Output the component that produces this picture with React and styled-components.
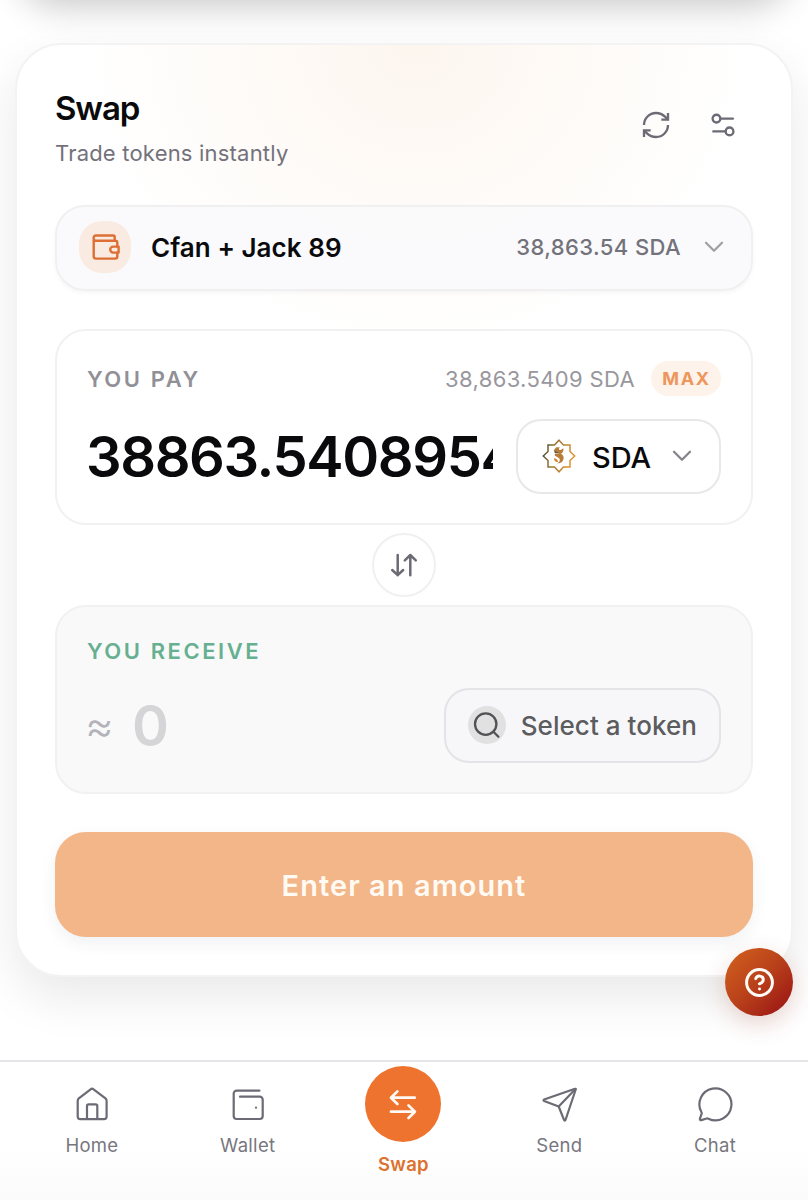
import React from 'react';
import styled, { createGlobalStyle } from 'styled-components';

const App = () => {
	return (
		<>
			<GlobalStyle />
			<S_PAGE>
				<S_MAIN>
					<S_PREVIOUS />
					<S_CARD>
						<S_HEADER>
							<div>
								<S_TITLE>Swap</S_TITLE>
								<S_SUBTITLE>Trade tokens instantly</S_SUBTITLE>
							</div>
							<S_ACTIONS>
								<RefreshIcon />
								<SettingsIcon />
							</S_ACTIONS>
						</S_HEADER>

						<S_ACCOUNT>
							<S_ACCOUNT_ICON>
								<WalletBadgeIcon />
							</S_ACCOUNT_ICON>
							<S_ACCOUNT_NAME>Cfan + Jack 89</S_ACCOUNT_NAME>
							<S_ACCOUNT_BALANCE>38,863.54 SDA</S_ACCOUNT_BALANCE>
							<ChevronIcon color="#a0a0a5" />
						</S_ACCOUNT>

						<S_PANEL>
							<S_PANEL_TOP $height={35}>
								<S_LABEL>YOU PAY</S_LABEL>
								<S_AVAILABLE>38,863.5409 SDA</S_AVAILABLE>
								<S_MAX>MAX</S_MAX>
							</S_PANEL_TOP>
							<S_PANEL_ROW>
								<S_AMOUNT>38863.5408954</S_AMOUNT>
								<S_TOKEN>
									<SidraIcon />
									<S_TOKEN_NAME>SDA</S_TOKEN_NAME>
									<ChevronIcon color="#85858b" />
								</S_TOKEN>
							</S_PANEL_ROW>
						</S_PANEL>

						<S_FLIP_ROW>
							<S_FLIP>
								<FlipIcon />
							</S_FLIP>
						</S_FLIP_ROW>

						<S_PANEL $muted>
							<S_PANEL_TOP $height={28}>
								<S_LABEL $green>YOU RECEIVE</S_LABEL>
							</S_PANEL_TOP>
							<S_PANEL_ROW>
								<S_ESTIMATE>
									<S_APPROX>≈</S_APPROX>
									<S_ZERO>0</S_ZERO>
								</S_ESTIMATE>
								<S_SELECT>
									<S_SEARCH>
										<SearchIcon />
									</S_SEARCH>
									<S_SELECT_TEXT>Select a token</S_SELECT_TEXT>
								</S_SELECT>
							</S_PANEL_ROW>
						</S_PANEL>

						<S_SUBMIT>Enter an amount</S_SUBMIT>
					</S_CARD>
				</S_MAIN>

				<S_NAV>
					<S_NAV_ITEM>
						<HomeIcon />
						<S_NAV_LABEL>Home</S_NAV_LABEL>
					</S_NAV_ITEM>
					<S_NAV_ITEM>
						<WalletIcon />
						<S_NAV_LABEL>Wallet</S_NAV_LABEL>
					</S_NAV_ITEM>
					<S_NAV_ITEM $active>
						<S_NAV_CIRCLE>
							<SwapIcon />
						</S_NAV_CIRCLE>
						<S_NAV_LABEL $active>Swap</S_NAV_LABEL>
					</S_NAV_ITEM>
					<S_NAV_ITEM>
						<SendIcon />
						<S_NAV_LABEL>Send</S_NAV_LABEL>
					</S_NAV_ITEM>
					<S_NAV_ITEM>
						<ChatIcon />
						<S_NAV_LABEL>Chat</S_NAV_LABEL>
					</S_NAV_ITEM>
				</S_NAV>

				<S_HELP aria-label="Help">
					<HelpIcon />
				</S_HELP>
			</S_PAGE>
		</>
	);
};

//Icons
const RefreshIcon = () => (
	<S_ICON $size={32} viewBox="0 0 24 24" strokeWidth="1.75">
		<path d="M3 12a9 9 0 0 1 9-9 9.75 9.75 0 0 1 6.74 2.74L21 8" />
		<path d="M21 3v5h-5" />
		<path d="M21 12a9 9 0 0 1-9 9 9.75 9.75 0 0 1-6.74-2.74L3 16" />
		<path d="M8 16H3v5" />
	</S_ICON>
);

const SettingsIcon = () => (
	<S_ICON $size={32} viewBox="0 0 24 24" strokeWidth="1.75" $round>
		<path d="M19.4 7.2H10" />
		<path d="M14 16.8H4.8" />
		<circle cx="7.1" cy="7.2" r="2.9" />
		<circle cx="16.9" cy="16.8" r="2.9" />
	</S_ICON>
);

const WalletBadgeIcon = () => (
	<S_ICON $size={32} viewBox="0 0 32 32" strokeWidth="2.4" $color="#dd6f35" $round>
		<path d="M25.7 9.7V6.1a1.6 1.6 0 0 0-1.6-1.6H6.7a2 2 0 0 0-2 2v1.2a2 2 0 0 0 2 2h19.6a2 2 0 0 1 2 2v3.8M4.700 7v18.200a2.400 2.400 0 0 0 2.400 2.400h19.200a2 2 0 0 0 2-2v-3.800" />
		<path d="M29.600 15.600h-5.400a3 3 0 0 0 0 6h5.400z" />
	</S_ICON>
);

const ChevronIcon = ({ color }) => (
	<S_ICON $size={20} viewBox="0 0 20 20" strokeWidth="2.3" $color={color} $round>
		<path d="m2 5.800 8 8 8-8" />
	</S_ICON>
);

const SidraIcon = () => (
	<S_ICON $size={34} viewBox="0 0 34 34" strokeWidth="1.5">
		<defs>
			<linearGradient id="sidra" x1="0" y1="0" x2="1" y2="0.25">
				<stop offset="0" stopColor="#3f4a3c" />
				<stop offset="0.4" stopColor="#9a7434" />
				<stop offset="1" stopColor="#dd942f" />
			</linearGradient>
		</defs>
		<path
			stroke="url(#sidra)"
			d="M17 1.200 21.500 6H28v6.500l4.700 4.500-4.700 4.500V28h-6.500L17 32.800 12.500 28H6v-6.500L1.300 17 6 12.500V6h6.500z"
		/>
		<path
			fill="#b97c36"
			stroke="none"
			d="M14 8.600c1.300-.6 3-.6 4.200.2-1 .2-1.500.8-1.200 1.600.4.7 1.600.8 2.600 0l1.800-1.200c.3 2.800-.6 4.600-2.600 5.500 1.900.9 3 2.400 2.800 4.600-.2 3.200-2.800 5.200-6.300 5 1.900-.8 2.900-2.300 2.400-4-.5-1.500-2.400-2.200-4.300-3.200-.8-.5-.8-1.300-.4-2l4.600-.2-5.600-3.900z"
		/>
		<path fill="#5d5538" stroke="none" d="m11.800 11 5.900 3.600-4.800-.4z" />
		<path fill="#d9822b" stroke="none" d="M12 19.200c2 .2 4 1.600 4 3.600-1.800.7-3.900-.6-4-3.600z" />
	</S_ICON>
);

const FlipIcon = () => (
	<S_ICON $size={32} viewBox="0 0 32 32" strokeWidth="2.5" $round>
		<path d="M9.700 6v20.200M4.200 21l5.500 5.200 5.500-5.200" />
		<path d="M22.300 26.200V6M16.800 11.400 22.300 6l5.500 5.400" />
	</S_ICON>
);

const SearchIcon = () => (
	<S_ICON $size={30} viewBox="0 0 30 30" strokeWidth="2.3" $color="#525255" $round>
		<circle cx="13.700" cy="14.100" r="10.700" />
		<path d="m21.400 21.800 5 4.900" />
	</S_ICON>
);

const HomeIcon = () => (
	<S_ICON $size={36} viewBox="0 0 36 36" strokeWidth="2.2" $round>
		<path d="M3.700 14.700c0-.9.4-1.700 1.100-2.300L16.600 3.300a2.400 2.400 0 0 1 3 0l11.900 9.100c.7.6 1.100 1.400 1.100 2.300V30.600a2.600 2.600 0 0 1-2.600 2.600H6.300a2.600 2.600 0 0 1-2.600-2.600z" />
		<path d="M13 33V20a1.700 1.700 0 0 1 1.700-1.700h6.900a1.700 1.700 0 0 1 1.700 1.700v13" />
	</S_ICON>
);

const WalletIcon = () => (
	<S_ICON $size={36} viewBox="0 0 36 36" strokeWidth="2.2" $round>
		<path d="M29.500 4.600H6.700a3 3 0 0 0-3 3v22.400a3 3 0 0 0 3 3h23a3 3 0 0 0 3-3V13.700a3 3 0 0 0-3-3H10" />
		<path d="M26 21.700h.01" />
	</S_ICON>
);

const SwapIcon = () => (
	<S_ICON $size={36} viewBox="0 0 36 36" strokeWidth="2.7" $color="#fffaf5" $round>
		<path d="M29.700 11.700H6M12.400 5.400 6 11.700l6.400 6.300" />
		<path d="M6 25.700h23.900M23.500 19.400l6.400 6.300-6.400 6.300" />
	</S_ICON>
);

const SendIcon = () => (
	<S_ICON $size={36} viewBox="0 0 36 36" strokeWidth="2.2" $round>
		<path d="M3.100 13.500 34 2.800c.5-.2.9.2.7.7L24.500 34c-.2.7-1.100.7-1.400.1L17.700 20.500 3.100 15c-.8-.3-.8-1.200 0-1.500z" />
		<path d="M17.700 20.400 34.400 3" />
	</S_ICON>
);

const ChatIcon = () => (
	<S_ICON $size={36} viewBox="0 0 36 36" strokeWidth="2.2" $round>
		<path d="M4.500 26.200a16 16 0 1 1 6.900 6.500c-.6-.3-1.200-.4-1.800-.2l-5.200 1.600c-1 .3-1.700-.4-1.500-1.400l1.700-4.900c.2-.5.200-1.100-.1-1.600z" />
	</S_ICON>
);

const HelpIcon = () => (
	<S_ICON $size={31} viewBox="0 0 24 24" strokeWidth="2.3" $color="#fffaf5" $round>
		<circle cx="12" cy="12" r="10" />
		<path d="M9.090 9a3 3 0 0 1 5.830 1c0 2-3 3-3 3" />
		<path d="M12 17h.01" />
	</S_ICON>
);

const GlobalStyle = createGlobalStyle`
	* {
		margin: 0;
		padding: 0;
		box-sizing: border-box;
	}

	body {
		background: #fff;
		font-family: 'Inter', 'Liberation Sans', sans-serif;
	}

	button {
		border: none;
		background: none;
		font-family: inherit;
	}
`;

const S_ICON = styled.svg`
	display: block;
	flex-shrink: 0;
	width: ${({ $size }) => $size}px;
	height: ${({ $size }) => $size}px;
	fill: none;
	stroke: ${({ $color }) => $color || '#6c6b75'};
	stroke-linecap: ${({ $round }) => ($round ? 'round' : 'butt')};
	stroke-linejoin: ${({ $round }) => ($round ? 'round' : 'miter')};
`;

const S_PAGE = styled.div`
	position: relative;
	display: flex;
	flex-direction: column;
	width: 808px;
	height: 1200px;
	overflow: hidden;
	white-space: nowrap;
`;

const S_MAIN = styled.main`
	flex: 1;
	min-height: 0;
	padding: 0 15px;
`;

/* bottom edge of the card that is scrolled out above */
const S_PREVIOUS = styled.div`
	height: 120px;
	margin: -121px 0 44px 1px;
	border-radius: 44px;
	background: #fff;
	box-shadow: 0 8px 34px rgba(0, 0, 0, 0.21);
`;

const S_CARD = styled.section`
	width: 778px;
	padding: 38px;
	border: 2px solid #f3f3f4;
	border-radius: 46px;
	background: radial-gradient(
			ellipse 330px 300px at 400px 0,
			#fdf6ef 0%,
			#fefaf6 45%,
			#fff 100%
		)
		#fff;
	box-shadow: 0 20px 50px rgba(0, 0, 0, 0.09);
`;

const S_HEADER = styled.header`
	display: flex;
	justify-content: space-between;
	align-items: center;
	height: 84px;
	margin-bottom: 38px;
`;

const S_TITLE = styled.h1`
	font-size: 33px;
	font-weight: 600;
	line-height: 50px;
	letter-spacing: -1.1px;
	color: #0a0a0c;
`;

const S_SUBTITLE = styled.p`
	margin-top: 6px;
	font-size: 22px;
	line-height: 28px;
	letter-spacing: 0.2px;
	color: #73727b;
`;

const S_ACTIONS = styled.div`
	display: flex;
	gap: 35px;
	padding-right: 14px;
`;

const S_ACCOUNT = styled.div`
	display: flex;
	align-items: center;
	height: 86px;
	margin-bottom: 38px;
	padding: 0 27px 2px 22px;
	border: 2px solid #f0f0f1;
	border-radius: 30px;
	background: rgba(249, 249, 251, 0.85);
	box-shadow: 0 2px 4px rgba(0, 0, 0, 0.04);
`;

const S_ACCOUNT_ICON = styled.div`
	display: flex;
	justify-content: center;
	align-items: center;
	width: 52px;
	height: 52px;
	margin-right: 20px;
	border-radius: 23px;
	background: #f9ebe1;
`;

const S_ACCOUNT_NAME = styled.span`
	flex: 1;
	font-size: 26px;
	font-weight: 600;
	letter-spacing: 0.04px;
	color: #0a0a0c;
`;

const S_ACCOUNT_BALANCE = styled.span`
	margin-right: 23px;
	font-size: 22px;
	font-weight: 500;
	letter-spacing: 0.4px;
	color: #73727b;
`;

const S_PANEL = styled.div`
	padding: 30px;
	border: 2px solid #f1f1f2;
	border-radius: 31px;
	background: ${({ $muted }) => ($muted ? '#f9f9f9' : '#fff')};
`;

const S_PANEL_TOP = styled.div`
	display: flex;
	align-items: center;
	height: ${({ $height }) => $height}px;
	margin-bottom: 23px;
`;

const S_LABEL = styled.span`
	flex: 1;
	font-size: 22px;
	font-weight: 600;
	letter-spacing: 2.55px;
	color: ${({ $green }) => ($green ? '#66b091' : '#919097')};
`;

const S_AVAILABLE = styled.span`
	margin-right: 16px;
	font-size: 22px;
	letter-spacing: 0.35px;
	color: #98979d;
`;

const S_MAX = styled.button`
	width: 70px;
	height: 35px;
	border-radius: 18px;
	background: #fdf3eb;
	font-size: 18px;
	font-weight: 700;
	letter-spacing: 1.6px;
	text-indent: 1px;
	color: #ee965c;
`;

const S_PANEL_ROW = styled.div`
	display: flex;
	justify-content: space-between;
	align-items: center;
	height: 74px;
`;

const S_AMOUNT = styled.div`
	width: 406px;
	padding-top: 2px;
	overflow: hidden;
	font-size: 56px;
	font-weight: 600;
	line-height: 72px;
	letter-spacing: -1.4px;
	text-indent: -1px;
	color: #0a0a0c;
`;

const S_TOKEN = styled.button`
	display: flex;
	align-items: center;
	width: 205px;
	height: 75px;
	padding: 0 27px 0 24px;
	border: 2px solid #e8e8eb;
	border-radius: 25px;
	background: #fff;
`;

const S_TOKEN_NAME = styled.span`
	flex: 1;
	margin-left: 16px;
	padding-top: 2px;
	font-size: 29px;
	font-weight: 500;
	letter-spacing: -0.1px;
	text-align: left;
	color: #0a0a0c;
`;

const S_FLIP_ROW = styled.div`
	display: flex;
	justify-content: center;
	align-items: center;
	height: 80px;
`;

const S_FLIP = styled.button`
	display: flex;
	justify-content: center;
	align-items: center;
	width: 64px;
	height: 64px;
	border: 2px solid #f0f0f2;
	border-radius: 50%;
	background: #fff;
`;

const S_ESTIMATE = styled.div`
	display: flex;
	align-items: center;
`;

const S_APPROX = styled.span`
	width: 45px;
	font-size: 44px;
	font-weight: 300;
	line-height: 74px;
	text-indent: -2px;
	color: #b4b3ba;
`;

const S_ZERO = styled.span`
	padding-top: 2px;
	font-size: 56px;
	font-weight: 600;
	line-height: 72px;
	color: #d5d5d7;
`;

const S_SELECT = styled.button`
	display: flex;
	align-items: center;
	width: 277px;
	height: 75px;
	padding: 0 22px;
	border: 2px solid #e3e3e8;
	border-radius: 25px;
	background: #f7f7f9;
`;

const S_SEARCH = styled.span`
	display: flex;
	justify-content: center;
	align-items: center;
	width: 38px;
	height: 38px;
	margin-right: 15px;
	border-radius: 50%;
	background: #e1e1e2;
`;

const S_SELECT_TEXT = styled.span`
	font-size: 26px;
	font-weight: 500;
	letter-spacing: 0.05px;
	color: #5c5c5f;
`;

const S_SUBMIT = styled.button`
	display: block;
	width: 100%;
	height: 105px;
	margin-top: 38px;
	padding-top: 2px;
	border-radius: 31px;
	background: #f3b688;
	box-shadow: 0 6px 16px rgba(40, 50, 80, 0.07);
	font-size: 29px;
	font-weight: 600;
	letter-spacing: 1.050px;
	color: #fffaf3;
`;

const S_NAV = styled.nav`
	display: flex;
	height: 140px;
	padding: 0 15px 0 14px;
	border-top: 2px solid #e6e5ea;
	background: linear-gradient(#fff 60%, #fbfbfb);
	z-index: 1;
`;

const S_NAV_ITEM = styled.div`
	display: flex;
	flex: 1;
	flex-direction: column;
	align-items: center;
	padding-top: ${({ $active }) => ($active ? 4 : 24)}px;
`;

const S_NAV_CIRCLE = styled.div`
	display: flex;
	justify-content: center;
	align-items: center;
	width: 76px;
	height: 76px;
	border-radius: 50%;
	background: #ee732e;
`;

const S_NAV_LABEL = styled.span`
	margin-top: ${({ $active }) => ($active ? 10 : 11)}px;
	font-size: 18.5px;
	font-weight: ${({ $active }) => ($active ? 600 : 400)};
	line-height: 24px;
	letter-spacing: 0.3px;
	color: ${({ $active }) => ($active ? '#dd7130' : '#77767e')};
`;

const S_HELP = styled.button`
	position: absolute;
	top: 948px;
	left: 725px;
	display: flex;
	justify-content: center;
	align-items: center;
	width: 68px;
	height: 68px;
	border-radius: 50%;
	background: linear-gradient(135deg, #d4631f 0%, #b8401a 50%, #960f14 100%);
	box-shadow: 0 8px 24px rgba(150, 50, 30, 0.2);
`;

export default App;
